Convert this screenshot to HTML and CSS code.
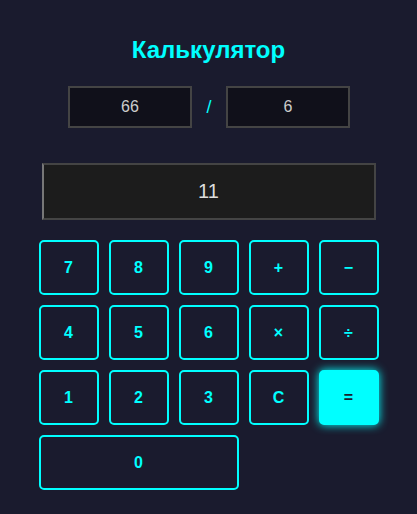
FILE: index.html
```html
<!DOCTYPE html>
<html lang="ru">
<head>
<meta charset="utf-8">
<title>Калькулятор</title>
<link rel="stylesheet" href="styles.css">
</head>
<body>
<div class="calc">
  <h1 class="title">Калькулятор</h1>
  <div class="operands">
    <input class="operand" type="text" value="66">
    <span class="op-sign">/</span>
    <input class="operand" type="text" value="6">
  </div>
  <div class="result">11</div>
  <div class="keys">
    <button class="key">7</button>
    <button class="key">8</button>
    <button class="key">9</button>
    <button class="key">+</button>
    <button class="key">−</button>
    <button class="key">4</button>
    <button class="key">5</button>
    <button class="key">6</button>
    <button class="key">×</button>
    <button class="key">÷</button>
    <button class="key">1</button>
    <button class="key">2</button>
    <button class="key">3</button>
    <button class="key">C</button>
    <button class="key key-eq">=</button>
    <button class="key key-zero">0</button>
  </div>
</div>
</body>
</html>
```
FILE: styles.css
```css
html, body {
  margin: 0;
  padding: 0;
  background: #1a1b2e;
}
body {
  font-family: "Liberation Sans", Arial, sans-serif;
}
.calc {
  width: 340px;
  margin: 0 auto;
  padding-top: 36px;
}
.title {
  margin: 0;
  font-size: 24px;
  line-height: 28px;
  font-weight: bold;
  color: #00ffff;
  text-align: center;
}
.operands {
  display: flex;
  justify-content: center;
  align-items: center;
  margin-top: 22px;
  padding-left: 1px;
}
.operand {
  box-sizing: border-box;
  width: 124px;
  height: 42px;
  margin: 0;
  border: 2px solid #444;
  background: #10101a;
  color: #cccccc;
  font-family: "Liberation Sans", Arial, sans-serif;
  font-size: 16px;
  text-align: center;
  outline: none;
}
.op-sign {
  width: 34px;
  text-align: center;
  color: #00ffff;
  font-size: 18px;
}
.result {
  box-sizing: border-box;
  height: 57px;
  margin: 35px 3px 0 3px;
  border: 2px solid #444;
  border-left-color: #777;
  background: #1c1c1c;
  color: #dddddd;
  font-size: 20px;
  display: flex;
  align-items: center;
  justify-content: center;
}
.keys {
  display: grid;
  grid-template-columns: repeat(5, 60px);
  grid-auto-rows: 55px;
  gap: 10px;
  margin-top: 20px;
}
.key {
  box-sizing: border-box;
  margin: 0;
  padding: 0;
  border: 2px solid #00ffff;
  border-radius: 5px;
  background: transparent;
  color: #00ffff;
  font-family: "Liberation Sans", Arial, sans-serif;
  font-size: 16px;
  font-weight: bold;
}
.key-eq {
  background: #00ffff;
  color: #1a1b2e;
  box-shadow: 0 0 10px #00ffff;
}
.key-zero {
  grid-column: span 3;
}
```
